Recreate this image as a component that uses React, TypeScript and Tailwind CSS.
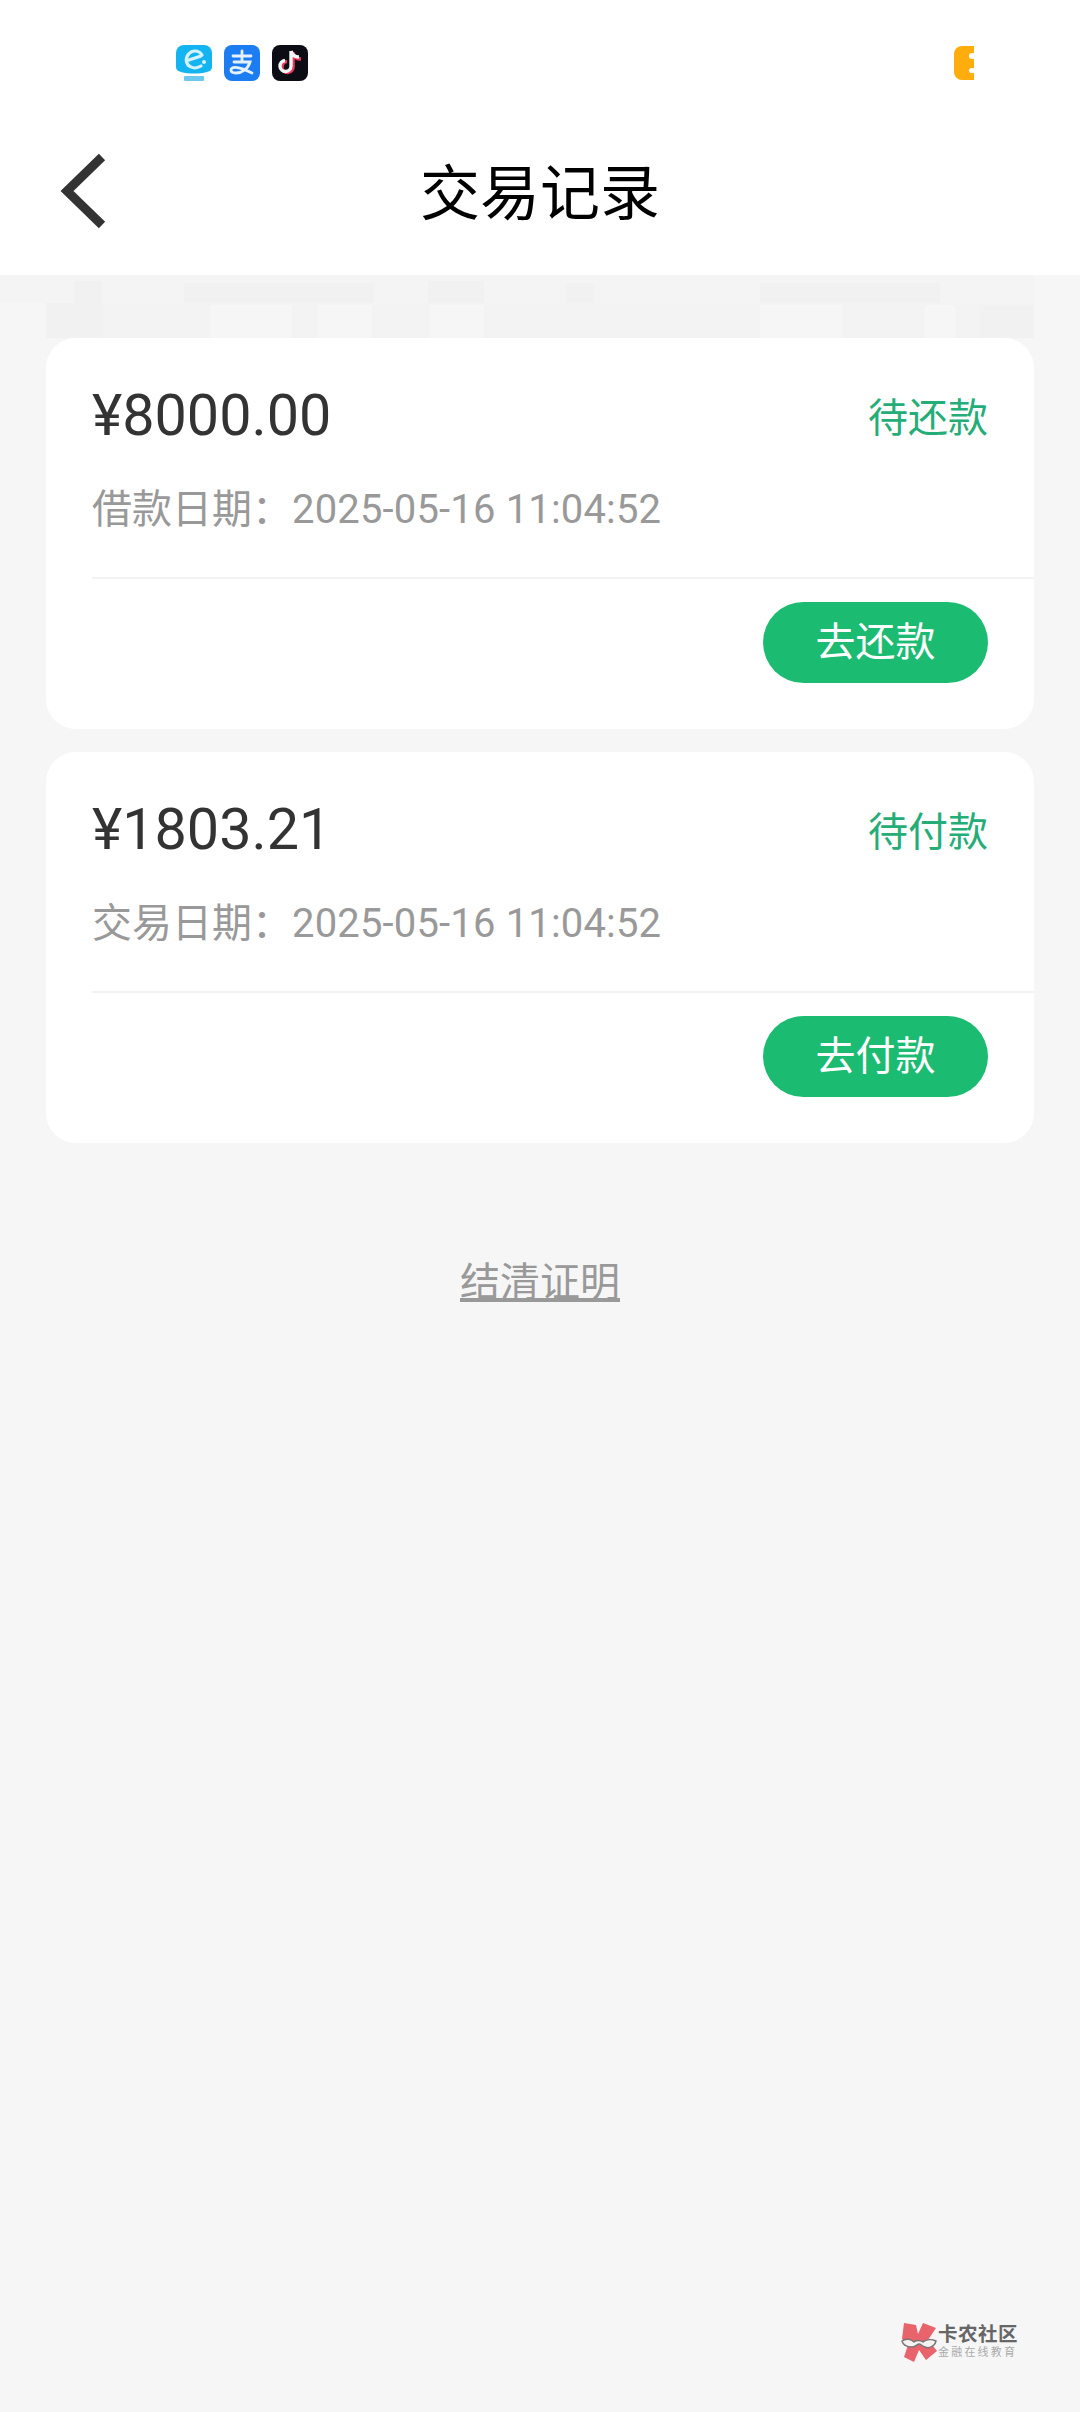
import React from 'react';

const records = [
  { amount: '¥8000.00', status: '待还款', dateLabel: '借款日期：', date: '2025-05-16 11:04:52', action: '去还款' },
  { amount: '¥1803.21', status: '待付款', dateLabel: '交易日期：', date: '2025-05-16 11:04:52', action: '去付款' },
];

// mosaic left over in the screenshot below the header: [x, y, w, h, fill]
const mosaic: [number, number, number, number, string][] = [
  [0, 0, 1034, 28, '#f4f4f4'],
  [74, 6, 28, 22, '#f1f1f1'],
  [184, 8, 190, 20, '#f1f1f1'],
  [428, 6, 56, 22, '#f1f1f1'],
  [566, 8, 28, 20, '#f1f1f1'],
  [760, 8, 180, 20, '#f1f1f1'],
  [46, 28, 988, 35, '#f3f3f3'],
  [46, 28, 56, 35, '#f1f1f1'],
  [210, 30, 82, 33, '#f6f6f6'],
  [318, 30, 54, 33, '#f6f6f6'],
  [430, 30, 54, 33, '#f6f6f6'],
  [760, 30, 82, 33, '#f6f6f6'],
  [925, 30, 30, 33, '#f6f6f6'],
  [980, 30, 54, 33, '#f1f1f1'],
];

const StatusIcons = () => (
  <div className="flex h-[125px] items-start gap-3 pt-[45px] pl-[176px] pr-[106px]">
    <svg width="36" height="37" viewBox="0 0 36 37">
      <path d="M8 0h20a8 8 0 0 1 8 8v14c0 3-2 4-5 5-8 2-18 2-26 0-3-1-5-2-5-5V8a8 8 0 0 1 8-8z" fill="#14b4f2" />
      <path d="M26 10c-2-4-7-5-11-3-5 3-6 9-3 13 3 3 8 4 13 1M13 15l12-4" fill="none" stroke="#d4f3ff" strokeWidth="3.2" strokeLinecap="round" />
      <circle cx="28" cy="17" r="2" fill="#d4f3ff" />
      <rect x="8" y="31" width="20" height="5" rx="1" fill="#6cc8ee" />
    </svg>
    <svg width="36" height="36" viewBox="0 0 36 36">
      <rect width="36" height="36" rx="8" fill="#1c7cf2" />
      <path d="M9 11h18M18 6v11M10 17h16c-2 7-8 11-14 11-3 0-5-1-5-3 0-3 5-5 21 3" fill="none" stroke="#e6f1ff" strokeWidth="2.8" strokeLinecap="round" />
    </svg>
    <svg width="36" height="36" viewBox="0 0 36 36">
      <rect width="36" height="36" rx="8" fill="#0c0c14" />
      <path d="M21 7v15a5.5 5.5 0 1 1-6-5.5M21 8c1 4 4 6 8 6" fill="none" stroke="#f0365c" strokeWidth="3.6" />
      <path d="M19 6v15a5.5 5.5 0 1 1-6-5.5M19 6c1 4 4 6 8 6" fill="none" stroke="#eef6f6" strokeWidth="3.4" />
    </svg>
    <div className="ml-auto mt-[1px] flex h-[34px] w-[20px] flex-col justify-center gap-[9px] rounded-l-[8px] bg-[#ffad0d] pl-[15px]">
      <div className="h-[6px] w-[5px] rounded-l-full bg-white" />
      <div className="h-[5px] w-[5px] rounded-l-full bg-white" />
    </div>
  </div>
);

const RecordCard = ({ record }: { record: (typeof records)[number] }) => (
  <div className="h-[391px] rounded-[30px] bg-white pl-[46px]">
    <div className="flex h-[241px] flex-col border-b-2 border-[#f3f3f3]">
      <div className="flex items-center justify-between pt-[46px] pr-[46px]">
        <span className="text-[57.5px] leading-[62px] text-[#333333]">{record.amount}</span>
        <span className="pt-[7px] text-[40px] leading-[56px] text-[#25ad78]">{record.status}</span>
      </div>
      <div className="mt-[33px] flex text-[40px] leading-[60px] text-[#999999]">
        <span>{record.dateLabel}</span>
        <span className="tracking-[0.16px]">{record.date}</span>
      </div>
    </div>
    <div className="flex justify-end pt-[23px] pr-[46px]">
      <button className="flex h-[81px] w-[225px] items-center justify-center rounded-full bg-[#1cbb72] text-[40px] text-white">
        {record.action}
      </button>
    </div>
  </div>
);

const App: React.FC = () => {
  return (
    <div className="relative h-[2412px] w-[1080px] overflow-hidden bg-[#f6f6f6] font-['Roboto','Noto_Sans_CJK_SC',sans-serif]">
      <header className="h-[275px] bg-white">
        <StatusIcons />
        <div className="grid h-[150px] grid-cols-[1fr_auto_1fr] items-start">
          <svg className="mt-[27px] ml-[58px]" width="50" height="78" viewBox="0 0 50 78">
            <path d="M44 5 L9 39 L44 73" fill="none" stroke="#333333" strokeWidth="9" />
          </svg>
          <h1 className="mt-[35px] text-[60px] leading-[70px] font-normal text-black">交易记录</h1>
        </div>
      </header>

      <svg className="block" width="1080" height="63" viewBox="0 0 1080 63">
        {mosaic.map(([x, y, w, h, fill], i) => (
          <rect key={i} x={x} y={y} width={w} height={h} fill={fill} />
        ))}
      </svg>

      <main className="flex flex-col gap-[23px] px-[46px]">
        {records.map((record) => (
          <RecordCard key={record.amount} record={record} />
        ))}
      </main>

      <div className="mt-[110px] text-center text-[40px] leading-[60px] text-[#999999] underline">结清证明</div>

      {/* watermark */}
      <div className="absolute top-[2322px] left-[901px] flex items-center gap-[1px]">
        <svg width="36" height="40" viewBox="0 0 36 40">
          <path d="M3 1l12 2 2 9 5-11 13 5-8 12 9 11-11 9-7-10-5 12-10-5 4-12-6-6z" fill="#e8636b" />
          <path d="M1 19c4-3 9-2 12 1 3-2 6-2 9 0 3-3 9-3 13-1-1 5-7 8-11 6-3-1-4-3-6-3-2 0-3 3-7 3-5 0-9-2-10-6z" fill="#f7f2f2" stroke="#777777" strokeWidth="1.4" />
        </svg>
        <div className="flex flex-col">
          <span className="text-[19.5px] leading-[22px] font-bold tracking-[0.5px] text-[#666666]">卡农社区</span>
          <span className="text-[11px] leading-[14px] tracking-[2.2px] text-[#aaaaaa]">金融在线教育</span>
        </div>
      </div>
    </div>
  );
};

export default App;
